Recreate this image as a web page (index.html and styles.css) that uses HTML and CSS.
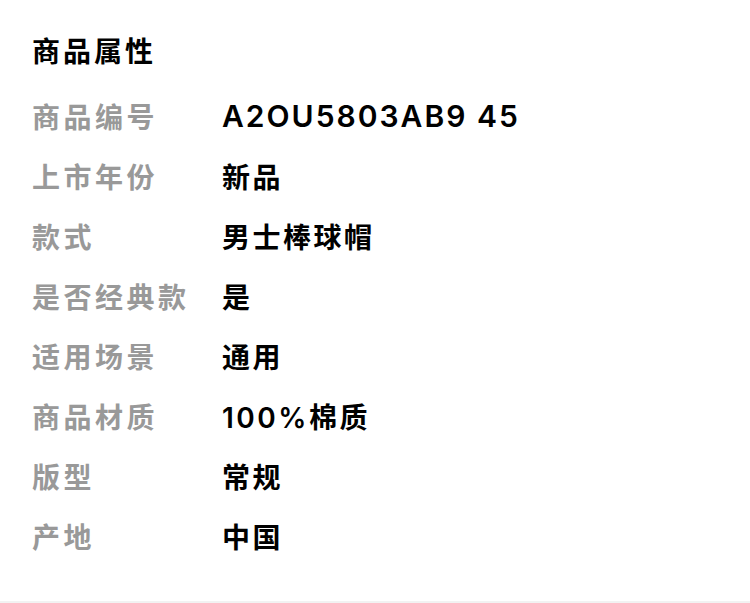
FILE: index.html
```html
<!DOCTYPE html>
<html lang="zh-CN">

<head>
    <meta charset="UTF-8">
    <meta name="viewport" content="width=device-width, initial-scale=1.0">
    <title>商品属性</title>
    <link rel="stylesheet" href="styles.css">
</head>

<body>
    <div class="attr">
        <h2 class="attr-title">商品属性</h2>
        <ul class="attr-list">
            <li><span class="label">商品编号</span><span class="value code">A2OU5803AB9 45</span></li>
            <li><span class="label">上市年份</span><span class="value">新品</span></li>
            <li><span class="label">款式</span><span class="value">男士棒球帽</span></li>
            <li><span class="label">是否经典款</span><span class="value">是</span></li>
            <li><span class="label">适用场景</span><span class="value">通用</span></li>
            <li><span class="label">商品材质</span><span class="value">100%棉质</span></li>
            <li><span class="label">版型</span><span class="value">常规</span></li>
            <li><span class="label">产地</span><span class="value">中国</span></li>
        </ul>
    </div>
    <div class="foot"></div>
</body>

</html>
```

FILE: styles.css
```css
* {
    margin: 0;
    padding: 0;
    box-sizing: border-box;
}

body {
    background: #fff;
    font-family: "Noto Sans CJK SC", "Noto Sans", sans-serif;
    color: #000;
}

.attr {
    height: 601px;
    padding: 30px 0 0 32px;
}

.attr-title {
    font-size: 28px;
    font-weight: 700;
    letter-spacing: 3px;
    line-height: 40px;
}

.attr-list {
    list-style: none;
    margin-top: 16px;
}

.attr-list li {
    display: flex;
    height: 60px;
    align-items: center;
}

.attr-list .label {
    width: 190px;
    font-size: 28px;
    font-weight: 700;
    letter-spacing: 3.5px;
    color: #999;
}

/* 영문/숫자는 Inter, 한자는 Noto CJK로 떨어짐 */
.attr-list .value {
    font-family: Inter, "Noto Sans CJK SC", sans-serif;
    font-size: 28px;
    font-weight: 600;
    letter-spacing: 2.5px;
}

/* 상품번호는 글자가 조금 더 큼 */
.attr-list .value.code {
    font-size: 30px;
    letter-spacing: 2px;
}

.foot {
    height: 2px;
    background: #f2f2f2;
}
```
